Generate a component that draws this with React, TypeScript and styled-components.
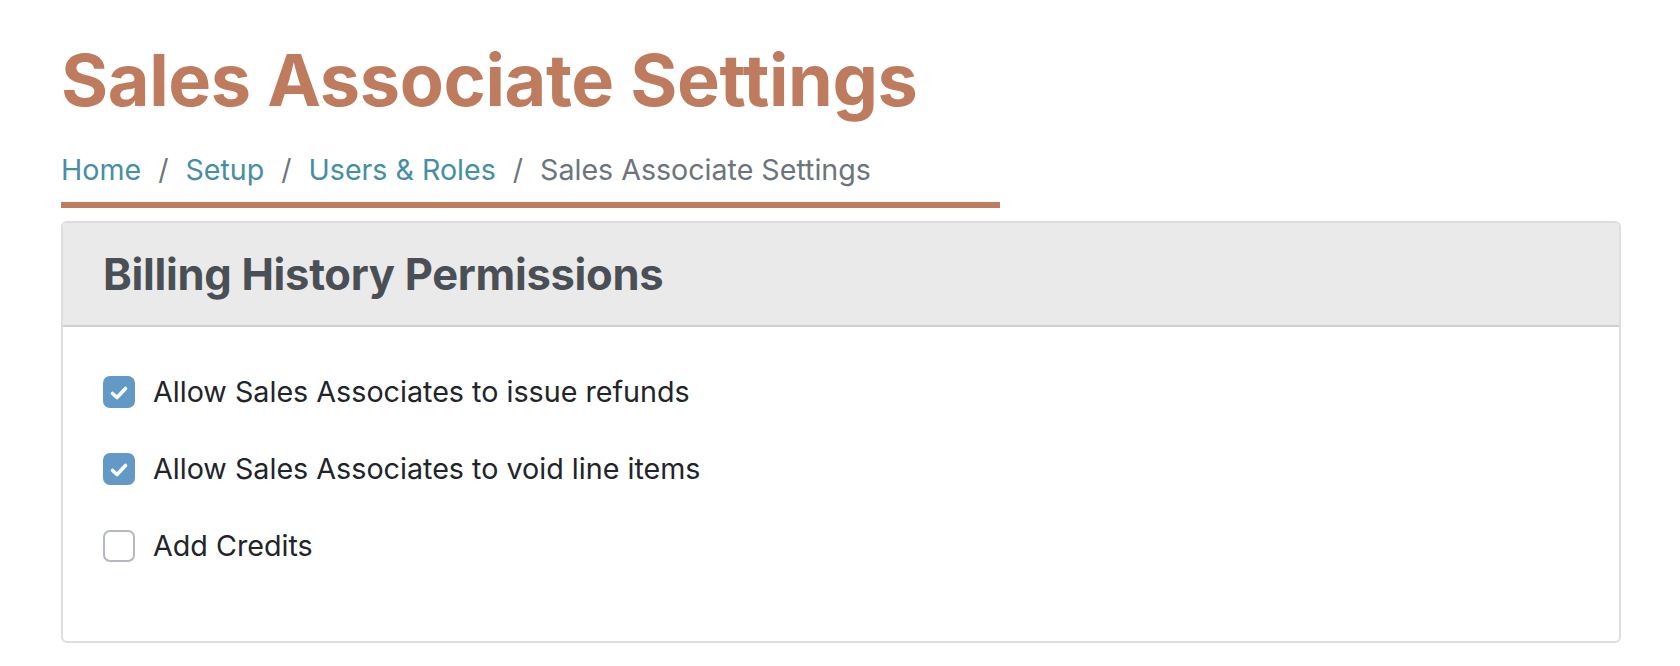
import React, { useState } from 'react';
import styled, { createGlobalStyle } from 'styled-components';

const GlobalStyle = createGlobalStyle`
    html, body {
        margin: 0;
        padding: 0;
        background: #ffffff;
        font-family: Inter, "Noto Sans", "Liberation Sans", sans-serif;
        -webkit-font-smoothing: antialiased;
    }
`;

const Page = styled.div`
    padding: 36px 59px 0 61px;
`;

const Title = styled.h1`
    margin: 0;
    font-size: 72px;
    line-height: 88px;
    font-weight: 700;
    color: #bf7b5d;
    letter-spacing: -0.4px;
`;

const Breadcrumb = styled.nav`
    width: 939px;
    display: flex;
    align-items: center;
    gap: 17px;
    margin-top: 28px;
    padding-bottom: 14px;
    border-bottom: 6px solid #bf7b5d;
    font-size: 28.6px;
    line-height: 36px;
`;

const Crumb = styled.a<{ current?: boolean }>`
    color: ${({ current }) => (current ? '#6c757d' : '#468ea4')};
    text-decoration: none;
`;

const Sep = styled.span`
    color: #6c757d;
`;

const Card = styled.section`
    margin-top: 13px;
    border: 2px solid #dedede;
    border-radius: 6px;
    overflow: hidden;
`;

const CardHeader = styled.header`
    background: #eaeaea;
    border-bottom: 2px solid #cfcfcf;
    height: 102px;
    display: flex;
    align-items: center;
    padding: 0 40px;
`;

const CardTitle = styled.h2`
    margin: 0;
    font-size: 43.5px;
    font-weight: 700;
    color: #4a4f55;
    letter-spacing: -0.3px;
`;

const CardBody = styled.div`
    padding: 47px 40px 77px;
    display: flex;
    flex-direction: column;
    gap: 41px;
`;

const Row = styled.label`
    display: flex;
    align-items: center;
    gap: 18px;
    font-size: 28.7px;
    line-height: 36px;
    color: #212529;
    cursor: pointer;
`;

const Box = styled.span<{ checked: boolean }>`
    width: 32px;
    height: 32px;
    box-sizing: border-box;
    border-radius: 7px;
    flex-shrink: 0;
    display: flex;
    align-items: center;
    justify-content: center;
    background: ${({ checked }) => (checked ? '#6399c7' : '#ffffff')};
    border: 2px solid ${({ checked }) => (checked ? '#6399c7' : '#b4b9c1')};
`;

const CheckMark = () => (
    <svg width="32" height="32" viewBox="0 0 32 32" style={{ margin: -2 }}>
        <path d="M9.5 17.5 L14 21.5 L22.5 12.5" fill="none" stroke="#ffffff" strokeWidth="3.6" strokeLinecap="round" strokeLinejoin="round" />
    </svg>
);

const permissions = [
    { label: 'Allow Sales Associates to issue refunds', on: true },
    { label: 'Allow Sales Associates to void line items', on: true },
    { label: 'Add Credits', on: false },
];

export default function App() {
    const [checked, setChecked] = useState(permissions.map(p => p.on));

    return (
        <>
            <GlobalStyle />
            <Page>
                <Title>Sales Associate Settings</Title>
                <Breadcrumb>
                    <Crumb href="#">Home</Crumb>
                    <Sep>/</Sep>
                    <Crumb href="#">Setup</Crumb>
                    <Sep>/</Sep>
                    <Crumb href="#">Users &amp; Roles</Crumb>
                    <Sep>/</Sep>
                    <Crumb current>Sales Associate Settings</Crumb>
                </Breadcrumb>
                <Card>
                    <CardHeader>
                        <CardTitle>Billing History Permissions</CardTitle>
                    </CardHeader>
                    <CardBody>
                        {permissions.map((p, i) => (
                            <Row key={p.label} onClick={() => setChecked(checked.map((c, j) => (j === i ? !c : c)))}>
                                <Box checked={checked[i]}>{checked[i] && <CheckMark />}</Box>
                                {p.label}
                            </Row>
                        ))}
                    </CardBody>
                </Card>
            </Page>
        </>
    );
}
